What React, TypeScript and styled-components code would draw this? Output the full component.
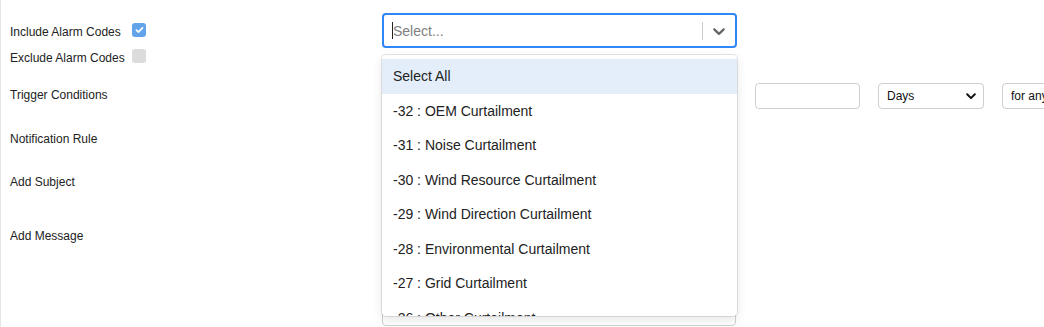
import React from 'react';
import styled, { createGlobalStyle } from 'styled-components';

const GlobalStyle = createGlobalStyle`
  html, body {
    margin: 0;
    padding: 0;
    background: #ffffff;
    overflow: hidden;
  }
  body {
    font-family: 'Liberation Sans', Arial, Helvetica, sans-serif;
    color: #222;
  }
`;

const Page = styled.div`
  width: 1044px;
  height: 327px;
  box-sizing: border-box;
  border-left: 1px solid #e4e4e4;
  padding-top: 13px;
  overflow: hidden;
`;

const Row = styled.div<{ $height?: number }>`
  display: grid;
  grid-template-columns: 381px 1fr;
  min-height: ${p => (p.$height ? `${p.$height}px` : 'auto')};
  align-items: start;
`;

const LabelCell = styled.div<{ $top?: number }>`
  padding-left: 9px;
  padding-top: ${p => p.$top ?? 0}px;
`;

const Label = styled.div`
  font-size: 12px;
  line-height: 24px;
  color: #222;
`;

const CheckRow = styled.label`
  display: flex;
  align-items: flex-start;
  height: 26px;
  font-size: 12px;
  line-height: 26px;
  color: #222;
`;

const CheckText = styled.span`
  width: 122px;
`;

const Box = styled.span<{ $checked?: boolean }>`
  width: 14px;
  height: 14px;
  margin-top: 4px;
  border-radius: 3px;
  background: ${p => (p.$checked ? '#62a3ea' : '#dcdcdc')};
  display: flex;
  align-items: center;
  justify-content: center;
`;

const FieldCell = styled.div`
  display: flex;
  align-items: flex-start;
  gap: 18px;
`;

/* react-select like control */
const SelectWrap = styled.div`
  position: relative;
  width: 355px;
`;

const Control = styled.div`
  box-sizing: border-box;
  height: 35px;
  border: 2px solid #2f86f6;
  border-radius: 4px;
  background: #fff;
  display: flex;
  align-items: center;
`;

const ValueArea = styled.div`
  flex: 1;
  display: flex;
  align-items: center;
  padding-left: 8px;
  font-size: 14px;
`;

const Caret = styled.span`
  width: 1px;
  height: 17px;
  background: #222;
`;

const Placeholder = styled.span`
  color: #808080;
`;

const Separator = styled.span`
  width: 1px;
  height: 18px;
  background: #cccccc;
`;

const Indicator = styled.div`
  width: 32px;
  display: flex;
  align-items: center;
  justify-content: center;
  color: #666;
`;

const Menu = styled.div`
  position: absolute;
  left: 0;
  top: 42px;
  width: 355px;
  height: 261px;
  box-sizing: border-box;
  padding-top: 4px;
  background: #fff;
  border-radius: 4px;
  box-shadow: 0 0 0 1px rgba(0, 0, 0, 0.1), 0 4px 11px rgba(0, 0, 0, 0.1);
  overflow: hidden;
  z-index: 5;
`;

const Option = styled.div<{ $focused?: boolean }>`
  padding: 8px 11px;
  line-height: 18.5px;
  font-size: 14px;
  color: #222;
  background: ${p => (p.$focused ? '#e3eefa' : 'transparent')};
  white-space: nowrap;
`;

/* plain inputs */
const TextBox = styled.div<{ $width: number; $height?: number }>`
  box-sizing: border-box;
  width: ${p => p.$width}px;
  height: ${p => p.$height ?? 26}px;
  border: 1px solid #cfcfcf;
  border-radius: 4px;
  background: #fff;
`;

const NativeSelect = styled.div<{ $width: number }>`
  box-sizing: border-box;
  width: ${p => p.$width}px;
  height: 26px;
  border: 1px solid #cfcfcf;
  border-radius: 4px;
  background: #fff;
  display: flex;
  align-items: center;
  justify-content: space-between;
  padding: 0 7px 0 8px;
  font-size: 12px;
  color: #111;
  white-space: nowrap;
  flex-shrink: 0;
`;

const Chevron = () => (
  <svg width="20" height="20" viewBox="0 0 20 20" fill="currentColor">
    <path d="M4.516 7.548c0.436-0.446 1.043-0.481 1.576 0l3.908 3.747 3.908-3.747c0.533-0.481 1.141-0.446 1.574 0 0.436 0.445 0.408 1.197 0 1.615-0.406 0.418-4.695 4.502-4.695 4.502-0.217 0.223-0.502 0.335-0.787 0.335s-0.57-0.112-0.789-0.335c0 0-4.287-4.084-4.695-4.502s-0.436-1.17 0-1.615z" />
  </svg>
);

const SmallChevron = () => (
  <svg width="10" height="7" viewBox="0 0 10 7">
    <path d="M1.2 1.3 L5 5.1 L8.8 1.3" fill="none" stroke="#111" strokeWidth="2" strokeLinecap="round" strokeLinejoin="round" />
  </svg>
);

const Check = () => (
  <svg width="9" height="8" viewBox="0 0 9 8">
    <path d="M1.5 4.2 L3.6 6 L7.5 1.8" fill="none" stroke="#fff" strokeWidth="1.8" strokeLinecap="round" strokeLinejoin="round" />
  </svg>
);

const options = [
  'Select All',
  '-32 : OEM Curtailment',
  '-31 : Noise Curtailment',
  '-30 : Wind Resource Curtailment',
  '-29 : Wind Direction Curtailment',
  '-28 : Environmental Curtailment',
  '-27 : Grid Curtailment',
  '-26 : Other Curtailment',
  '-25 : Manual Stop',
];

export default function App() {
  return (
    <>
      <GlobalStyle />
      <Page>
        <Row $height={70}>
          <LabelCell $top={6}>
            <CheckRow>
              <CheckText>Include Alarm Codes</CheckText>
              <Box $checked>
                <Check />
              </Box>
            </CheckRow>
            <CheckRow>
              <CheckText>Exclude Alarm Codes</CheckText>
              <Box />
            </CheckRow>
          </LabelCell>
          <FieldCell>
            <SelectWrap>
              <Control>
                <ValueArea>
                  <Caret />
                  <Placeholder>Select...</Placeholder>
                </ValueArea>
                <Separator />
                <Indicator>
                  <Chevron />
                </Indicator>
              </Control>
              <Menu>
                {options.map((o, i) => (
                  <Option key={o} $focused={i === 0}>
                    {o}
                  </Option>
                ))}
              </Menu>
            </SelectWrap>
          </FieldCell>
        </Row>

        <Row $height={44}>
          <LabelCell>
            <Label>Trigger Conditions</Label>
          </LabelCell>
          <FieldCell>
            <TextBox $width={355} />
            <TextBox $width={105} />
            <NativeSelect $width={106}>
              <span>Days</span>
              <SmallChevron />
            </NativeSelect>
            <NativeSelect $width={106}>
              <span>for any</span>
              <SmallChevron />
            </NativeSelect>
          </FieldCell>
        </Row>

        <Row $height={43}>
          <LabelCell>
            <Label>Notification Rule</Label>
          </LabelCell>
          <FieldCell>
            <TextBox $width={355} />
          </FieldCell>
        </Row>

        <Row $height={54}>
          <LabelCell>
            <Label>Add Subject</Label>
          </LabelCell>
          <FieldCell>
            <TextBox $width={355} />
          </FieldCell>
        </Row>

        <Row>
          <LabelCell>
            <Label>Add Message</Label>
          </LabelCell>
          <FieldCell>
            <TextBox $width={354} $height={102} />
          </FieldCell>
        </Row>
      </Page>
    </>
  );
}
